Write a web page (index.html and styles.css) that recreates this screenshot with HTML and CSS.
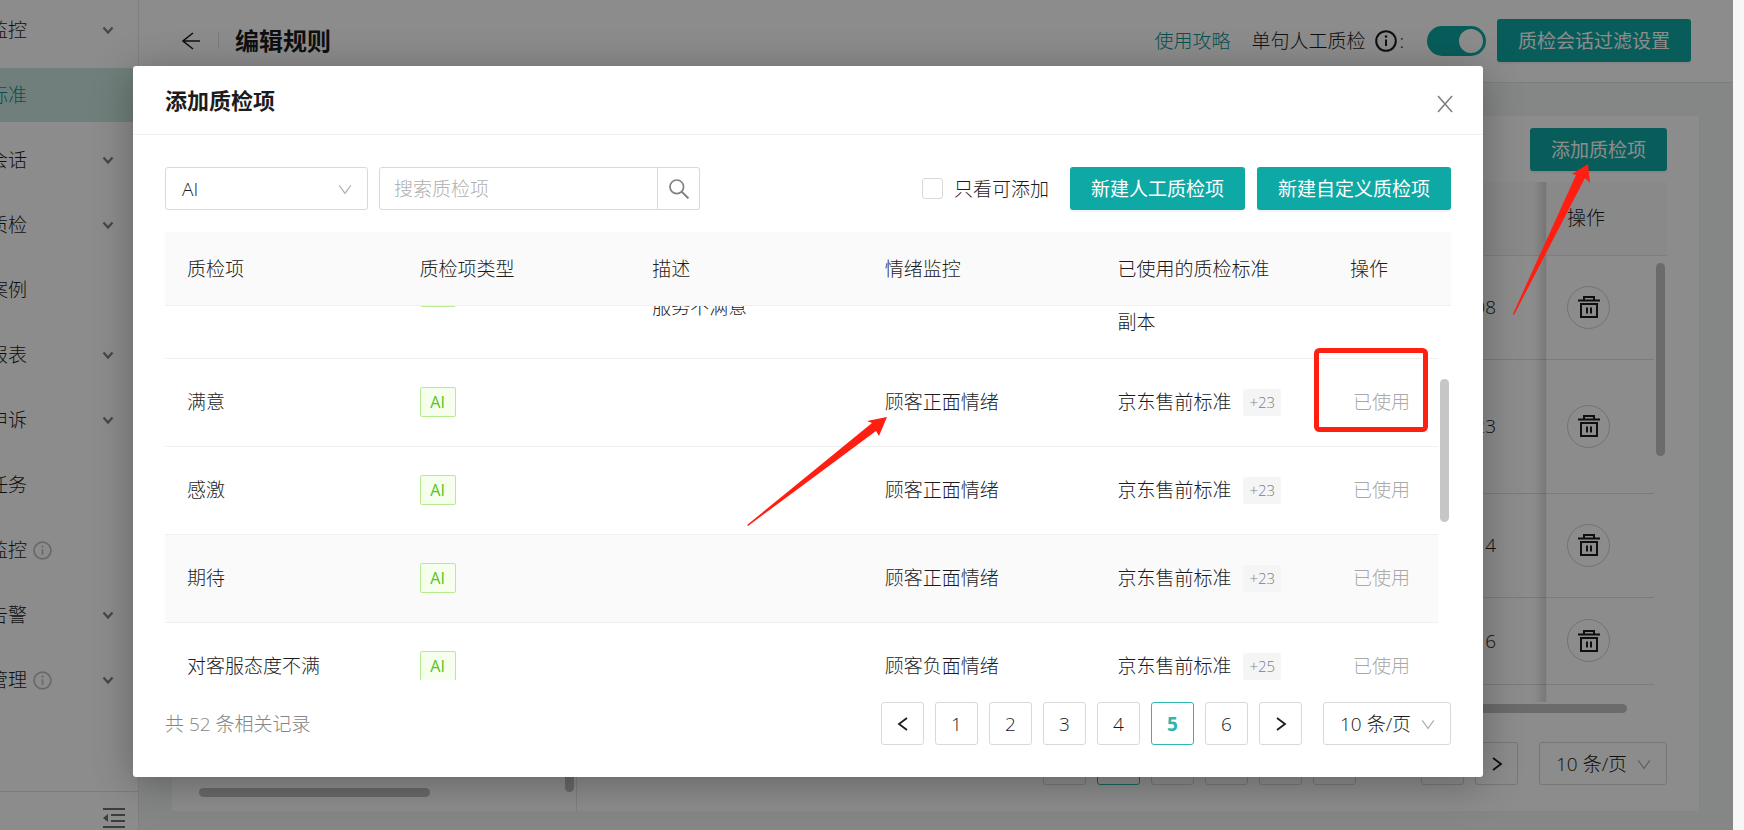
FILE: index.html
```html
<!DOCTYPE html>
<html lang="zh-CN">
<head>
<meta charset="utf-8">
<title>编辑规则</title>
<meta name="viewport" content="width=device-width, initial-scale=1">
<link rel="stylesheet" href="styles.css">
</head>
<body>
<svg class="sprite" aria-hidden="true">
  <symbol id="caret" viewBox="0 0 12 12"><path d="M1.5 3.5 6 8.5l4.500-5" fill="none" stroke="currentColor" stroke-width="2.200"/></symbol>
  <symbol id="down" viewBox="0 0 14 12"><path d="M.7 1.500 7 10.300l6.300-8.800" fill="none" stroke="currentColor" stroke-width="1.300"/></symbol>
  <symbol id="info" viewBox="0 0 22 22"><circle cx="11" cy="11" r="9.800" fill="none" stroke="currentColor" stroke-width="2"/><path d="M11 9.500v6.500" stroke="currentColor" stroke-width="2"/><circle cx="11" cy="6.500" r="1.300" fill="currentColor"/></symbol>
  <symbol id="prev" viewBox="0 0 14 14"><path d="M11 1 3 7l8 6" fill="none" stroke="currentColor" stroke-width="1.800"/></symbol>
  <symbol id="next" viewBox="0 0 14 14"><path d="m3 1 8 6-8 6" fill="none" stroke="currentColor" stroke-width="1.800"/></symbol>
  <symbol id="trash" viewBox="0 0 22 22"><path d="M0 4.500h22M6 4V1h10v3M3 8h16v13H3z" fill="none" stroke="currentColor" stroke-width="2"/><path d="M9 11.500v6M13 11.500v6" stroke="currentColor" stroke-width="2"/></symbol>
</svg>

<div class="app">
  <nav class="sidebar" aria-label="主菜单">
    <ul class="menu">
      <li><a href="#" class="menu-item"><span class="menu-label">监控</span><svg class="caret"><use href="#caret"/></svg></a></li>
      <li><a href="#" class="menu-item active"><span class="menu-label">标准</span></a></li>
      <li><a href="#" class="menu-item"><span class="menu-label">会话</span><svg class="caret"><use href="#caret"/></svg></a></li>
      <li><a href="#" class="menu-item"><span class="menu-label">质检</span><svg class="caret"><use href="#caret"/></svg></a></li>
      <li><a href="#" class="menu-item"><span class="menu-label">案例</span></a></li>
      <li><a href="#" class="menu-item"><span class="menu-label">报表</span><svg class="caret"><use href="#caret"/></svg></a></li>
      <li><a href="#" class="menu-item"><span class="menu-label">申诉</span><svg class="caret"><use href="#caret"/></svg></a></li>
      <li><a href="#" class="menu-item"><span class="menu-label">任务</span></a></li>
      <li><a href="#" class="menu-item"><span class="menu-label">监控</span><svg class="hint"><use href="#info"/></svg></a></li>
      <li><a href="#" class="menu-item"><span class="menu-label">告警</span><svg class="caret"><use href="#caret"/></svg></a></li>
      <li><a href="#" class="menu-item"><span class="menu-label">管理</span><svg class="hint"><use href="#info"/></svg><svg class="caret"><use href="#caret"/></svg></a></li>
    </ul>
    <div class="sidebar-foot">
      <button type="button" class="fold" aria-label="收起菜单">
        <svg width="22" height="20" viewBox="0 0 22 20"><path d="M0 1h22M8 7h14M8 13h14M0 19h22" stroke="currentColor" stroke-width="2"/><path d="M5 6v8L0 10z" fill="currentColor"/></svg>
      </button>
    </div>
  </nav>

  <div class="main">
    <header class="topbar">
      <button type="button" class="back" aria-label="返回">
        <svg width="18" height="18" viewBox="0 0 18 18"><path d="M18 9H1M11 1 1 9l10 8" fill="none" stroke="currentColor" stroke-width="1.600"/></svg>
      </button>
      <span class="rule"></span>
      <h1>编辑规则</h1>
      <a href="#" class="guide">使用攻略</a>
      <label class="switch-label" for="manual">单句人工质检 <svg class="info"><use href="#info"/></svg>:</label>
      <input type="checkbox" role="switch" id="manual" class="switch" checked>
      <button type="button" class="btn primary">质检会话过滤设置</button>
    </header>
    <div class="panels">
      <section class="left-panel">
        <div class="bar-v"></div>
        <div class="bar-h"></div>
      </section>
      <section class="right-panel">
        <div class="panel-tools"><button type="button" class="btn primary">添加质检项</button></div>
        <div class="rules-wrap">
          <table class="rules">
            <thead><tr><th></th><th class="fixed">操作</th><th class="gutter"></th></tr></thead>
            <tbody>
              <tr class="h104"><td>08</td><td class="fixed"><button type="button" class="round" aria-label="删除"><svg><use href="#trash"/></svg></button></td><td class="gutter"></td></tr>
              <tr class="h134"><td>23</td><td class="fixed"><button type="button" class="round" aria-label="删除"><svg><use href="#trash"/></svg></button></td><td class="gutter"></td></tr>
              <tr class="h104"><td>4</td><td class="fixed"><button type="button" class="round" aria-label="删除"><svg><use href="#trash"/></svg></button></td><td class="gutter"></td></tr>
              <tr class="h87"><td>6</td><td class="fixed"><button type="button" class="round" aria-label="删除"><svg><use href="#trash"/></svg></button></td><td class="gutter"></td></tr>
              <tr class="h104"><td></td><td class="fixed"></td><td class="gutter"></td></tr>
            </tbody>
          </table>
          <div class="rules-bar"></div>
        </div>
        <div class="rules-hbar"></div>
        <div class="pager">
          <button type="button" class="page" aria-label="上一页"></button>
          <button type="button" class="page current" aria-label="第一页"></button>
          <button type="button" class="page" aria-label="第二页"></button>
          <button type="button" class="page" aria-label="第三页"></button>
          <button type="button" class="page" aria-label="第四页"></button>
          <button type="button" class="page" aria-label="第五页"></button>
          <span class="page skip"></span>
          <button type="button" class="page" aria-label="末页"></button>
          <button type="button" class="page" aria-label="下一页"><svg><use href="#next"/></svg></button>
          <span class="select size"><select aria-label="每页条数"><option>10 条/页</option></select><svg><use href="#down"/></svg></span>
        </div>
      </section>
    </div>
  </div>

  <div class="mask">
    <div class="modal" role="dialog" aria-labelledby="modal-title">
      <header class="modal-head">
        <h2 id="modal-title">添加质检项</h2>
        <button type="button" class="close" aria-label="关闭"><svg width="16" height="18" viewBox="0 0 16 18"><path d="M1 1l14 16M15 1 1 17" fill="none" stroke="currentColor" stroke-width="1.600"/></svg></button>
      </header>
      <div class="modal-body">
        <div class="filters">
          <span class="select kind"><select aria-label="质检项类型"><option>AI</option></select><svg><use href="#down"/></svg></span>
          <div class="search">
            <input type="text" placeholder="搜索质检项" aria-label="搜索质检项">
            <button type="button" aria-label="搜索"><svg width="20" height="20" viewBox="0 0 20 20"><circle cx="7.800" cy="7.800" r="6.800" fill="none" stroke="currentColor" stroke-width="1.700"/><path d="m12.600 12.600 6.800 6.800" stroke="currentColor" stroke-width="2"/></svg></button>
          </div>
          <label class="only"><input type="checkbox">只看可添加</label>
          <div class="actions">
            <button type="button" class="btn primary">新建人工质检项</button>
            <button type="button" class="btn primary">新建自定义质检项</button>
          </div>
        </div>

        <table class="items head">
          <colgroup><col><col><col><col><col><col class="act"><col class="bar"></colgroup>
          <thead><tr><th>质检项</th><th>质检项类型</th><th>描述</th><th>情绪监控</th><th>已使用的质检标准</th><th>操作</th><th></th></tr></thead>
        </table>
        <div class="scroll">
          <table class="items">
            <colgroup><col><col><col><col><col><col class="act"></colgroup>
            <tbody>
              <tr><td></td><td><span class="tag">AI</span></td><td><br>服务不满意</td><td></td><td><br><br>副本</td><td></td></tr>
              <tr><td>满意</td><td><span class="tag">AI</span></td><td></td><td>顾客正面情绪</td><td><span class="std">京东售前标准<span class="more">+23</span></span></td><td><button type="button" class="used" disabled>已使用</button></td></tr>
              <tr><td>感激</td><td><span class="tag">AI</span></td><td></td><td>顾客正面情绪</td><td><span class="std">京东售前标准<span class="more">+23</span></span></td><td><button type="button" class="used" disabled>已使用</button></td></tr>
              <tr class="hover"><td>期待</td><td><span class="tag">AI</span></td><td></td><td>顾客正面情绪</td><td><span class="std">京东售前标准<span class="more">+23</span></span></td><td><button type="button" class="used" disabled>已使用</button></td></tr>
              <tr><td>对客服态度不满</td><td><span class="tag">AI</span></td><td></td><td>顾客负面情绪</td><td><span class="std">京东售前标准<span class="more">+25</span></span></td><td><button type="button" class="used" disabled>已使用</button></td></tr>
            </tbody>
          </table>
          <div class="thumb"></div>
        </div>

        <footer class="modal-foot">
          <span class="total">共 52 条相关记录</span>
          <div class="pager">
            <button type="button" class="page" aria-label="上一页"><svg><use href="#prev"/></svg></button>
            <button type="button" class="page">1</button>
            <button type="button" class="page">2</button>
            <button type="button" class="page">3</button>
            <button type="button" class="page">4</button>
            <button type="button" class="page current">5</button>
            <button type="button" class="page">6</button>
            <button type="button" class="page" aria-label="下一页"><svg><use href="#next"/></svg></button>
            <span class="select size"><select aria-label="每页条数"><option>10 条/页</option></select><svg><use href="#down"/></svg></span>
          </div>
        </footer>
      </div>
    </div>
  </div>

  <svg class="marks" aria-hidden="true">
    <rect x="1316.500" y="350.500" width="109" height="79" rx="3" fill="none" stroke="#ff1e12" stroke-width="5"/>
    <path d="M887 417 867 421l5 2L747 525l1 1L876 431l3 5z" fill="#ff1e12"/>
    <path d="M1588 164l-16 10 4 1-63 139 1 1 71-137 5 5z" fill="#ff1e12"/>
  </svg>
</div>
</body>
</html>
```

FILE: styles.css
```css
:root {
  --teal: #0fa9a5;
  --line: #f0f0f0;
  --edge: #d9d9d9;
  --ink: #1c1c1c;
}

* { box-sizing: border-box; }

body {
  margin: 0;
  background: #f7f7f7;
  color: var(--ink);
  font: 300 19px/30px "Open Sans", "Noto Sans CJK SC", sans-serif;
}

button, input, select { font: inherit; color: inherit; margin: 0; }
button { cursor: pointer; padding: 0; }
a { text-decoration: none; color: inherit; }
h1, h2 { margin: 0; font-weight: 700; }
.sprite { position: absolute; width: 0; height: 0; }

.app {
  position: relative;
  display: flex;
  height: 100vh;
  margin-right: 11px;
  overflow: hidden;
  background: #f3f6f4;
}

/* sidebar */
.sidebar {
  flex: none;
  display: flex;
  flex-direction: column;
  justify-content: space-between;
  width: 139px;
  background: #fff;
  border-right: 1px solid #e8e8e8;
}
.menu {
  display: grid;
  gap: 11px;
  margin: 0;
  padding: 3px 0 0;
  list-style: none;
}
.menu-item {
  display: flex;
  align-items: center;
  height: 54px;
  padding-right: 24px;
}
.menu-item.active { background: #cde7e1; color: #089490; }
.menu-label {
  display: flex;
  justify-content: flex-end;
  width: 27px;
  overflow: hidden;
  white-space: nowrap;
}
.caret { width: 12px; height: 12px; margin-left: auto; color: #808080; }
.hint { width: 19px; height: 19px; margin-left: 6px; color: #bfbfbf; }
.sidebar-foot {
  display: flex;
  justify-content: flex-end;
  height: 39px;
  padding: 16px 13px 0 0;
  border-top: 1px solid #e2e2e2;
}
.fold { height: 20px; border: 0; background: none; color: #707070; line-height: 0; }

/* page */
.main { flex: 1; display: flex; flex-direction: column; min-width: 0; }
.topbar {
  display: flex;
  align-items: center;
  height: 83px;
  padding: 0 42px 1px 43px;
  background: #fff;
  border-bottom: 1px solid #e4e4e4;
}
.back { height: 18px; border: 0; background: none; line-height: 0; }
.rule { width: 1px; height: 17px; margin: 0 16px 0 18px; background: #e0e0e0; }
.topbar h1 { font-size: 24px; }
.guide { margin-left: auto; color: #089490; }
.switch-label { display: flex; align-items: center; margin: 0 23px 0 21px; }
.info { width: 22px; height: 22px; margin: 0 2px 0 10px; }
.switch {
  appearance: none;
  display: flex;
  justify-content: flex-end;
  width: 59px;
  height: 30px;
  margin-right: 11px;
  padding: 3px;
  border-radius: 15px;
  background: var(--teal);
}
.switch::before { content: ""; width: 24px; height: 24px; border-radius: 50%; background: #fff; }

.btn {
  height: 43px;
  padding: 0 21px;
  border: 0;
  border-radius: 3px;
  font-weight: 400;
  white-space: nowrap;
}
.primary { background: var(--teal); color: #fff; box-shadow: 0 2px 0 rgba(0, 0, 0, .04); }

.panels { flex: 1; display: flex; min-height: 0; padding: 33px 34px 19px 33px; }
.left-panel {
  display: flex;
  flex-direction: column;
  justify-content: flex-end;
  width: 405px;
  padding: 0 2px 14px 27px;
  background: #fff;
  border-right: 1px solid #e6e6e6;
}
.bar-v { align-self: flex-end; width: 9px; height: 193px; margin-bottom: -4px; border-radius: 5px; background: #c0c0c0; }
.bar-h { width: 231px; height: 9px; border-radius: 5px; background: #c0c0c0; }
.right-panel {
  flex: 1;
  display: flex;
  flex-direction: column;
  min-width: 0;
  padding: 12px 32px 26px;
  background: #fff;
}
.panel-tools { display: flex; justify-content: flex-end; margin-bottom: 11px; }
.rules-wrap { position: relative; flex: 1; min-height: 0; overflow: hidden; }
.rules { width: 100%; border-spacing: 0; table-layout: fixed; }
.rules th { height: 74px; padding: 0; background: #fafafa; border-bottom: 1px solid #e6e6e6; font-weight: 300; }
.rules td { padding: 0 50px 1px 0; border-bottom: 1px solid #e0e0e0; text-align: right; }
.rules .fixed {
  position: relative;
  width: 108px;
  padding: 0 0 1px 20px;
  border-left: 1px solid #f4f4f4;
  text-align: left;
}
.rules .fixed::before {
  content: "";
  position: absolute;
  top: 0;
  bottom: -1px;
  left: -31px;
  width: 30px;
  box-shadow: inset -14px 0 10px -8px rgba(0, 0, 0, .15);
}
.rules .gutter { width: 13px; padding: 0; }
.rules td.gutter { border: 0; }
.h104 { height: 104px; }
.h134 { height: 134px; }
.h87 { height: 87px; }
.round {
  display: flex;
  align-items: center;
  justify-content: center;
  width: 43px;
  height: 43px;
  border: 1px solid #d0d0d0;
  border-radius: 50%;
  background: #fff;
}
.round svg { width: 22px; height: 22px; }
.rules-bar { position: absolute; top: 81px; right: 2px; width: 9px; height: 193px; border-radius: 5px; background: #c4c4c4; }
.rules-hbar { height: 9px; margin: 2px 40px 29px 0; border-radius: 5px; background: #c4c4c4; }

/* pagination and selects */
.pager { display: flex; justify-content: flex-end; gap: 11px; }
.page {
  display: flex;
  align-items: center;
  justify-content: center;
  width: 43px;
  height: 43px;
  border: 1px solid var(--edge);
  border-radius: 3px;
  background: #fff;
}
.page svg { width: 14px; height: 14px; }
.page.current { border-color: #2db7b0; color: #2db7b0; font-weight: 700; }
.page.skip { border-color: transparent; }
.select { position: relative; display: block; height: 43px; }
.select select {
  appearance: none;
  width: 100%;
  height: 100%;
  padding: 0 16px;
  border: 1px solid var(--edge);
  border-radius: 3px;
  background: #fff;
}
.select svg { position: absolute; top: 17px; right: 16px; width: 14px; height: 11px; color: #b0b0b0; pointer-events: none; }
.size { width: 128px; margin-left: 10px; }
.kind { width: 203px; }

/* dialog */
.mask {
  position: absolute;
  inset: 0;
  display: flex;
  padding: 66px 250px 53px 133px;
  background: rgba(0, 0, 0, .45);
}
.modal {
  flex: 1;
  display: flex;
  flex-direction: column;
  min-width: 0;
  background: #fff;
  border-radius: 3px;
  box-shadow: 0 6px 40px rgba(0, 0, 0, .3);
}
.modal-head {
  display: flex;
  align-items: center;
  justify-content: space-between;
  height: 69px;
  padding: 0 30px 0 32px;
  border-bottom: 1px solid var(--line);
}
.modal-head h2 { font-size: 22px; }
.close { height: 18px; margin-top: 8px; border: 0; background: none; color: #808080; line-height: 0; }
.modal-body { flex: 1; display: flex; flex-direction: column; min-height: 0; padding: 32px; }
.filters { display: flex; align-items: center; gap: 11px; margin-bottom: 22px; }
.actions { display: flex; gap: 12px; }
.search { display: flex; width: 321px; height: 43px; }
.search input {
  flex: 1;
  min-width: 0;
  padding: 0 14px;
  border: 1px solid var(--edge);
  border-radius: 3px 0 0 3px;
}
.search input::placeholder { color: #b0b0b0; opacity: 1; }
.search button {
  display: flex;
  align-items: center;
  justify-content: center;
  width: 42px;
  border: 1px solid var(--edge);
  border-left: 0;
  border-radius: 0 3px 3px 0;
  background: #fff;
  color: #808080;
}
.only { display: flex; align-items: center; gap: 11px; margin: 0 10px 0 auto; }
.only input { appearance: none; width: 21px; height: 21px; border: 1px solid var(--edge); border-radius: 3px; background: #fff; }

.items { width: calc(100% - 13px); border-spacing: 0; table-layout: fixed; }
.items.head { width: 100%; }
.items .act { width: 110px; }
.items .bar { width: 13px; }
.items th {
  height: 74px;
  padding: 0 0 0 22px;
  background: #fafafa;
  border-bottom: 1px solid var(--line);
  font-weight: 300;
  text-align: left;
  white-space: nowrap;
}
.items td { height: 88px; padding: 20px 0 21px 22px; border-bottom: 1px solid var(--line); }
.items .hover td { background: #fafafa; }
.scroll { position: relative; flex: 1; min-height: 0; margin-bottom: 22px; overflow: hidden; }
.scroll .items { margin-top: -79px; }
.thumb { position: absolute; top: 73px; right: 2px; width: 9px; height: 143px; border-radius: 5px; background: #c6c6c6; }
.tag {
  display: flex;
  align-items: center;
  justify-content: center;
  width: 36px;
  height: 30px;
  border: 1px solid #b7eb8f;
  border-radius: 2px;
  background: #f6ffed;
  color: #52c41a;
  font-size: 16px;
  font-weight: 400;
}
.std { display: flex; align-items: center; gap: 12px; white-space: nowrap; }
.more { padding: 0 6px; border-radius: 3px; background: #f5f5f5; color: #808080; font-size: 15px; line-height: 27px; }
.used { display: block; padding: 0 3px; border: 0; background: none; color: #a8a8a8; }
.modal-foot { display: flex; align-items: center; justify-content: space-between; }
.total { color: #858585; }

/* annotations drawn over the page */
.marks { position: absolute; inset: 0; width: 100%; height: 100%; pointer-events: none; }
```
